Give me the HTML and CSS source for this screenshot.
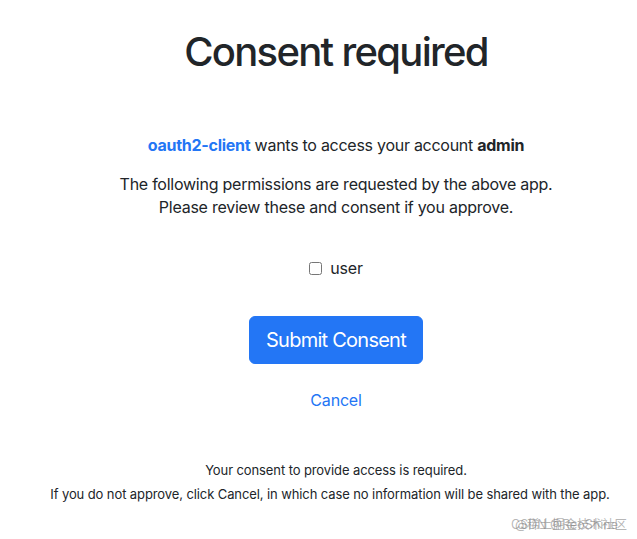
FILE: index.html
```html
<!DOCTYPE html>
<html lang="en">
<head>
<meta charset="utf-8">
<title>Consent required</title>
<link rel="stylesheet" href="styles.css">
</head>
<body>
<main class="page">
  <h1 class="title">Consent required</h1>
  <p class="lead-line"><a class="client" href="#">oauth2-client</a> wants to access your account <strong>admin</strong></p>
  <p class="info">The following permissions are requested by the above app.<br>Please review these and consent if you approve.</p>
  <form class="consent-form">
    <label class="scope"><input type="checkbox" class="scope-box" name="scope" value="user"> user</label>
    <button type="button" class="btn-submit">Submit Consent</button>
    <a class="cancel" href="#">Cancel</a>
  </form>
  <div class="notes">
    <p class="note">Your consent to provide access is required.</p>
    <p class="note note-long">If you do not approve, click Cancel, in which case no information will be shared with the app.</p>
  </div>
</main>
<div class="watermark"><span class="wm-a">CSDN @ReoShine</span><span class="wm-b">@稀土掘金技术社区</span></div>
</body>
</html>
```
FILE: styles.css
```css
* { box-sizing: border-box; }
html, body { margin: 0; padding: 0; background: #fff; }
body {
  font-family: Inter, "Liberation Sans", "Noto Sans CJK SC", sans-serif;
  color: #212529;
  font-size: 16px;
  line-height: 1.5;
}
.page {
  display: flex;
  flex-direction: column;
  align-items: center;
  text-align: center;
  padding: 28px 0 0 35px;
}
.title {
  margin: 0;
  font-size: 40px;
  font-weight: 500;
  line-height: 48px;
  letter-spacing: -1.7px;
}
.lead-line {
  margin: 57px 0 0;
  letter-spacing: -0.27px;
}
.client {
  color: #2376f5;
  font-weight: 700;
  text-decoration: none;
}
.info {
  margin: 16px 0 0;
  line-height: 23px;
  letter-spacing: -0.25px;
}
.consent-form {
  display: flex;
  flex-direction: column;
  align-items: center;
  margin-top: 37px;
}
.scope {
  display: flex;
  align-items: center;
  gap: 8px;
  line-height: 24px;
  letter-spacing: -0.2px;
}
.scope-box {
  width: 13px;
  height: 13px;
  margin: 0;
}
.btn-submit {
  margin-top: 36px;
  font-family: inherit;
  font-size: 20px;
  line-height: 30px;
  padding: 8px 16px;
  color: #fff;
  background: #2376f5;
  border: 1px solid #2376f5;
  border-radius: 6px;
  font-weight: 400;
  letter-spacing: -0.75px;
}
.cancel {
  margin-top: 24px;
  color: #2376f5;
  text-decoration: none;
  line-height: 24px;
  letter-spacing: -0.2px;
}
.notes {
  margin-top: 48px;
  display: flex;
  flex-direction: column;
  align-items: center;
  gap: 3px;
}
.note {
  margin: 0;
  font-size: 13px;
  line-height: 21px;
  letter-spacing: -0.1px;
}
.note-long {
  position: relative;
  left: -6px;
}
.watermark {
  position: absolute;
  left: 511px;
  top: 516px;
  font-size: 12.5px;
  color: rgba(120,120,120,0.55);
  white-space: nowrap;
}
.wm-a, .wm-b { position: absolute; left: 0; top: 0; }
.wm-b { left: 4px; }
```
